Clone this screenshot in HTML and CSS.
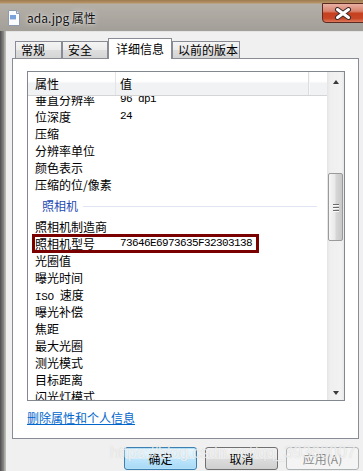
FILE: index.html
```html
<!DOCTYPE html>
<html>
<head>
<meta charset="utf-8">
<title>ada.jpg 属性</title>
<link rel="stylesheet" href="styles.css">
</head>
<body>
<div class="win">
    <!-- 标题栏 -->
    <div class="titlebar">
        <svg class="fileicon" width="14" height="16" viewBox="0 0 14 16">
            <path d="M1.5 0.5h8l3 3v12h-11z" fill="#fbfcfe" stroke="#8d9bb0"/>
            <path d="M9.5 0.5v3h3" fill="#dde4ee" stroke="#8d9bb0"/>
            <rect x="3" y="5" width="6" height="4" fill="#7aa3dc"/>
            <rect x="3" y="9" width="6" height="1" fill="#c9d6ea"/>
        </svg>
        <span class="title">ada.jpg 属性</span>
        <div class="closebtn">
            <svg width="18" height="13" viewBox="0 0 18 13">
                <path d="M3.5 2.5L14.5 10.5M14.5 2.5L3.5 10.5" stroke="#3b2b2a" stroke-width="5" stroke-linecap="round"/>
                <path d="M3.5 2.5L14.5 10.5M14.5 2.5L3.5 10.5" stroke="#ffffff" stroke-width="3" stroke-linecap="round"/>
            </svg>
        </div>
    </div>

    <div class="client">
        <!-- 选项卡 -->
        <div class="tabs">
            <div class="tab t1">常规</div>
            <div class="tab t2">安全</div>
            <div class="tab on">详细信息</div>
            <div class="tab t4">以前的版本</div>
        </div>

        <div class="panel">
            <div class="list">
                <div class="listmain">
                    <div class="head">
                        <div class="hname">属性</div>
                        <div class="hval">值</div>
                        <div class="hrest"></div>
                    </div>
                    <div class="body">
                        <div class="rows">
                            <div class="row"><span class="name">垂直分辨率</span><span class="val">96 dpi</span></div>
                            <div class="row"><span class="name">位深度</span><span class="val">24</span></div>
                            <div class="row"><span class="name">压缩</span></div>
                            <div class="row"><span class="name">分辨率单位</span></div>
                            <div class="row"><span class="name">颜色表示</span></div>
                            <div class="row"><span class="name">压缩的位/像素</span></div>
                            <div class="group"><span>照相机</span><i></i></div>
                            <div class="row"><span class="name">照相机制造商</span></div>
                            <div class="row mark"><span class="name">照相机型号</span><span class="val">73646E6973635F32303138</span><div class="box"></div></div>
                            <div class="row"><span class="name">光圈值</span></div>
                            <div class="row"><span class="name">曝光时间</span></div>
                            <div class="row"><span class="name"><span class="mono">ISO </span>速度</span></div>
                            <div class="row"><span class="name">曝光补偿</span></div>
                            <div class="row"><span class="name">焦距</span></div>
                            <div class="row"><span class="name">最大光圈</span></div>
                            <div class="row"><span class="name">测光模式</span></div>
                            <div class="row"><span class="name">目标距离</span></div>
                            <div class="row"><span class="name">闪光灯模式</span></div>
                        </div>
                    </div>
                </div>
                <!-- 滚动条 -->
                <div class="scroll">
                    <div class="sb-up"><b></b></div>
                    <div class="sb-gap"></div>
                    <div class="thumb"><i></i><i></i><i></i></div>
                    <div class="sb-rest"></div>
                    <div class="sb-down"><b></b></div>
                </div>
            </div>
            <a class="link" href="#">删除属性和个人信息</a>
        </div>

        <!-- 按钮 -->
        <div class="buttons">
            <div class="btn ok">确定</div>
            <div class="btn">取消</div>
            <div class="btn off">应用(A)</div>
        </div>
    </div>

    <div class="watermark">https://blog.csdn.net/qq_39368007</div>
</div>
</body>
</html>
```

FILE: styles.css
```css
*{
    margin: 0;
    padding: 0;
    box-sizing: border-box;
}
body{
    font-family: "Noto Sans CJK SC", "Liberation Sans", sans-serif;
    font-size: 12px;
    color: #000;
    background: #a8a49c;
}
/* 窗口 */
.win{
    width: 363px;
    height: 471px;
    display: flex;
    flex-direction: column;
    position: relative;
    overflow: hidden;
    background: linear-gradient(to right, #4e4e4e 0, #6f6f6f 2px, #8d8c89 4px, #c4c2bd 5px, #b3b0a9 6px);
}
/* 标题栏 */
.titlebar{
    height: 31px;
    flex: none;
    display: flex;
    align-items: center;
    padding-left: 7px;
    position: relative;
    background: linear-gradient(#9a7a50 0, #b89466 3px, #b4b0a8 4px, #aaa69f 20px, #a29f98 31px);
}
.fileicon{
    margin-top: 4px;
}
.title{
    margin-left: 6px;
    margin-top: 3px;
    font-size: 12px;
    color: #111;
    text-shadow: 0 0 6px rgba(255,255,255,0.8), 0 0 2px rgba(255,255,255,0.7);
}
.closebtn{
    position: absolute;
    left: 322px;
    top: 3px;
    width: 44px;
    height: 20px;
    border: 1px solid #5c2a20;
    border-radius: 0 0 0 4px;
    background: linear-gradient(#e8b0a2 0, #d9836f 40%, #c5401f 52%, #c84626 80%, #de7a5c 100%);
    display: flex;
    justify-content: center;
    align-items: center;
    padding-right: 3px;
}
/* 客户区 */
.client{
    flex: 1;
    margin-left: 6px;
    background: #f0f0f0;
    border-top: 1px solid #e4e4e4;
    padding: 6px 4px 0 6px;
    display: flex;
    flex-direction: column;
}
.tabs{
    display: flex;
    align-items: flex-end;
    height: 20px;
    margin-left: 3px;
    position: relative;
    z-index: 1;
}
.tab{
    height: 17px;
    line-height: 16px;
    padding-left: 5px;
    border: 1px solid #898c95;
    border-bottom: none;
    background: linear-gradient(#f4f4f4, #ebebeb 50%, #dedede 51%, #d5d5d5);
}
.t1{ width: 47px; }
.t2{ width: 46px; }
.t4{ width: 68px; }
.tab.on{
    width: 64px;
    height: 21px;
    line-height: 20px;
    padding-left: 7px;
    margin-bottom: -1px;
    background: #fff;
}
.panel{
    width: 347px;
    height: 381px;
    border: 1px solid #898c95;
    background: #fff;
    padding: 12px 14px 0 14px;
}
/* 列表 */
.list{
    width: 318px;
    height: 330px;
    border: 1px solid #828790;
    display: flex;
}
.listmain{
    flex: 1;
    display: flex;
    flex-direction: column;
    min-width: 0;
}
.head{
    height: 24px;
    flex: none;
    display: flex;
    border-bottom: 1px solid #d5d5d5;
    background: linear-gradient(#ffffff 0, #ffffff 40%, #f1f2f4 50%, #f1f2f4);
    line-height: 23px;
}
.hname{
    width: 88px;
    padding-left: 7px;
    border-right: 1px solid #e3e4e6;
}
.hval{
    width: 193px;
    padding-left: 4px;
    border-right: 1px solid #dcdde0;
    box-shadow: 1px 0 0 #f8f8f9;
}
.hrest{
    flex: 1;
}
.body{
    flex: 1;
    overflow: hidden;
}
.rows{
    margin-top: -5px;
}
.row{
    height: 17px;
    line-height: 17px;
    display: flex;
    position: relative;
}
.name{
    width: 92px;
    padding-left: 7px;
    white-space: nowrap;
}
.val, .mono{
    font-family: "Liberation Mono", "DejaVu Sans Mono", monospace;
    font-size: 11px;
    letter-spacing: -0.6px;
}
.mono{
    letter-spacing: -0.4px;
}
.group{
    height: 25px;
    display: flex;
    align-items: center;
    padding-left: 14px;
    color: #1e4bb4;
}
.group i{
    flex: 1;
    height: 1px;
    margin: 1px 10px 0 5px;
    background: #dfe5f2;
}
/* 标注框 */
.box{
    position: absolute;
    left: 4px;
    top: -1px;
    width: 227px;
    height: 19px;
    border: 3px solid #7a0000;
}
/* 滚动条 */
.scroll{
    width: 17px;
    flex: none;
    display: flex;
    flex-direction: column;
    background: linear-gradient(to right, #e4e4e4, #efefef 3px, #f2f2f2 14px, #e8e8e8);
}
.sb-up, .sb-down{
    height: 17px;
    display: flex;
    justify-content: center;
    align-items: center;
}
.sb-up b{
    border-left: 3px solid transparent;
    border-right: 3px solid transparent;
    border-bottom: 4px solid #3a3a3a;
    margin-top: 2px;
}
.sb-down b{
    border-left: 3px solid transparent;
    border-right: 3px solid transparent;
    border-top: 4px solid #3a3a3a;
    margin-top: 2px;
}
.sb-gap{
    height: 84px;
}
.thumb{
    height: 68px;
    margin: 0 1px;
    border: 1px solid #9a9a9a;
    border-radius: 2px;
    background: linear-gradient(to right, #f6f6f6, #e9e9e9 45%, #d6d6d6 55%, #c8c8c8);
    display: flex;
    flex-direction: column;
    justify-content: center;
    align-items: center;
}
.thumb i{
    width: 6px;
    height: 1px;
    background: #6a6a6a;
    box-shadow: 0 1px 0 #fafafa;
    margin: 1px 0;
}
.sb-rest{
    flex: 1;
}
.link{
    display: block;
    margin-top: 8px;
    line-height: 17px;
    color: #0066cc;
    text-decoration: underline;
    width: max-content;
}
/* 按钮 */
.buttons{
    display: flex;
    justify-content: flex-end;
    gap: 8px;
    margin-top: 8px;
}
.btn{
    width: 73px;
    height: 23px;
    line-height: 21px;
    text-align: center;
    border: 1px solid #707070;
    border-radius: 3px;
    background: linear-gradient(#f3f3f3, #ebebeb 50%, #dddddd 51%, #cfcfcf);
}
.btn.ok{
    border-color: #3c7fb1;
    background: linear-gradient(#eaf6fd, #d9f0fc 50%, #bee6fd 51%, #a7d9f5);
    box-shadow: inset 0 0 0 1px #b4e0f8;
}
.btn.off{
    border-color: #adb2b5;
    background: #f4f4f4;
    color: #8a8a8a;
}
/* 水印 */
.watermark{
    position: absolute;
    left: 110px;
    top: 444px;
    font-family: "Liberation Sans", sans-serif;
    font-size: 16px;
    color: rgba(255,255,255,0.72);
    text-shadow: 0 0 1px rgba(120,120,120,0.35);
    white-space: nowrap;
}
```
